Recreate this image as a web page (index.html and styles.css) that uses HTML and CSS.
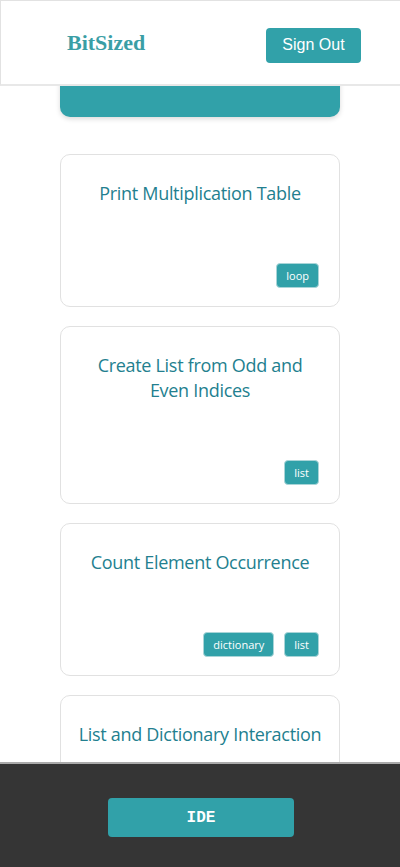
FILE: index.html
```html
<!DOCTYPE html>
<html lang="en">
<head>
<meta charset="utf-8">
<title>BitSized</title>
<link rel="stylesheet" href="styles.css">
</head>
<body>
<header class="topbar">
  <div class="logo">BitSized</div>
  <button class="signout">Sign Out</button>
</header>
<main class="content">
  <div class="hero"></div>
  <div class="card">
    <h3 class="card-title">Print Multiplication Table</h3>
    <div class="tags"><span class="tag">loop</span></div>
  </div>
  <div class="card">
    <h3 class="card-title">Create List from Odd and Even Indices</h3>
    <div class="tags"><span class="tag">list</span></div>
  </div>
  <div class="card">
    <h3 class="card-title">Count Element Occurrence</h3>
    <div class="tags"><span class="tag">dictionary</span><span class="tag">list</span></div>
  </div>
  <div class="card">
    <h3 class="card-title">List and Dictionary Interaction</h3>
    <div class="tags"><span class="tag">list</span><span class="tag">dictionary</span></div>
  </div>
</main>
<footer class="bottombar">
  <button class="ide">IDE</button>
</footer>
</body>
</html>
```
FILE: styles.css
```css
* { box-sizing: border-box; }
html, body { margin: 0; padding: 0; background: #fff; }
body { font-family: "Open Sans", "Noto Sans", sans-serif; overflow: hidden; height: 867px; }

.topbar {
  position: fixed;
  top: 0; left: 0;
  width: 402px;
  height: 86px;
  background: #fff;
  border: 1px solid #e2e2e2;
  border-bottom: 2px solid #e8e8e8;
  display: flex;
  align-items: center;
  justify-content: space-between;
  padding: 0 40px 0 66px;
  z-index: 10;
}
.logo {
  font-family: "Liberation Serif", serif;
  font-weight: bold;
  font-size: 22px;
  color: #3a9ea5;
  margin-top: 1px;
}
.signout {
  background: #31a1a9;
  color: #fff;
  border: none;
  border-radius: 4px;
  width: 95px;
  height: 35px;
  font-family: "Liberation Sans", Arial, sans-serif;
  font-size: 16px;
  margin-top: 5px;
}

.content {
  display: flex;
  flex-direction: column;
  align-items: center;
  gap: 19px;
  padding-top: 57px;
}
.hero {
  width: 280px;
  height: 60px;
  background: #31a1a9;
  border-radius: 10px;
  box-shadow: 0 2px 5px rgba(0,0,0,0.15);
  margin-bottom: 18px;
}
.card {
  width: 280px;
  border: 1px solid #e1e1e1;
  border-radius: 10px;
  padding: 26px 17px 18px;
  background: #fff;
}
.card-title {
  margin: 0;
  font-weight: normal;
  font-size: 18px;
  line-height: 25px;
  color: #237f8f;
  text-align: center;
  letter-spacing: -0.3px;
}
.tags {
  display: flex;
  justify-content: flex-end;
  gap: 10px;
  margin-top: 57px;
  padding-right: 3px;
}
.tag {
  background: #31a1a9;
  color: #fff;
  border: 1px solid #a9d5d8;
  border-radius: 4px;
  height: 25px;
  padding: 0 9px;
  font-size: 11px;
  line-height: 23px;
}

.bottombar {
  position: fixed;
  left: 0; bottom: 0;
  width: 400px;
  height: 105px;
  background: #353535;
  border-top: 2px solid #aaa;
  display: flex;
  justify-content: center;
  align-items: center;
  padding-top: 4px;
  z-index: 10;
}
.ide {
  width: 186px;
  height: 39px;
  background: #31a1a9;
  color: #fff;
  border: none;
  border-radius: 4px;
  font-family: "Liberation Mono", monospace;
  font-weight: bold;
  font-size: 16px;
  margin-left: 2px;
}
```
